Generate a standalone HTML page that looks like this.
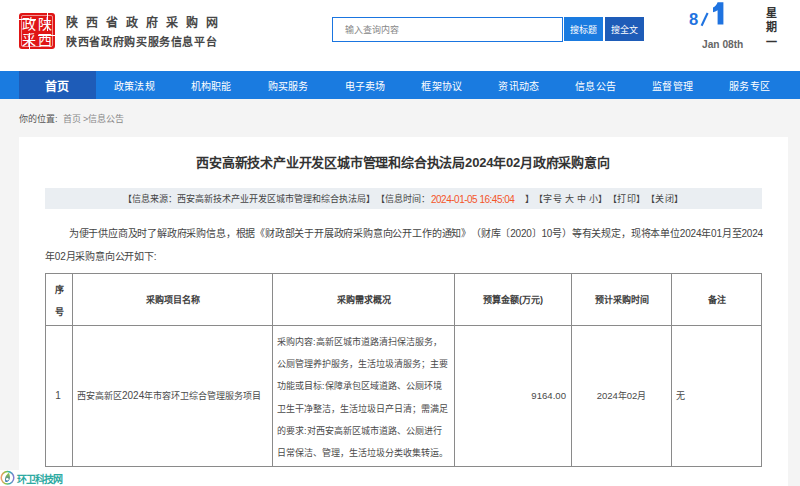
<!DOCTYPE html>
<html lang="zh-CN"><head><meta charset="utf-8">
<style>
*{margin:0;padding:0;box-sizing:border-box;}
html,body{width:800px;height:486px;overflow:hidden;}
body{background:#f4f4f4;font-family:"Liberation Sans",sans-serif;color:#333;position:relative;text-spacing-trim:space-all;}
.abs{position:absolute;white-space:nowrap;}
#header{position:absolute;left:0;top:0;width:800px;height:71px;background:#fff;}
#logo{position:absolute;left:19px;top:13px;width:36px;height:36px;background:#e01515;border-radius:3px;}
#logo .in{position:absolute;left:2px;top:2px;width:32px;height:32px;border:0.6px solid rgba(255,255,255,.55);border-radius:2px;}
#logo .c{position:absolute;color:#fff;font-size:14px;line-height:14px;font-weight:500;}
#logo .l{position:absolute;background:#fff;}
.t1{left:66px;top:16px;font-size:12px;letter-spacing:7.95px;color:#484848;font-weight:bold;line-height:14px;}
.t2{left:66px;top:35px;font-size:11px;letter-spacing:0.65px;color:#484848;font-weight:bold;line-height:14px;}
#search{position:absolute;left:332px;top:17px;width:231px;height:25px;border:1.5px solid #1a75e0;background:#fff;}
#search span{position:absolute;left:12px;top:6px;font-size:9px;color:#888;line-height:12px;}
.btn{position:absolute;top:17px;height:24px;width:39px;color:#fff;font-size:9px;line-height:26px;text-align:center;}
#b1{left:564px;background:#1a7be0;}
#b2{left:605px;background:#1e5cb8;}
#date8{left:689px;top:9.5px;font-size:16.6px;font-weight:bold;color:#1f73e0;line-height:20px;}
#date1{left:711px;top:-3px;font-size:30px;font-weight:bold;color:#1f73e0;line-height:32px;}
#jan{left:702px;top:38px;font-size:10.2px;font-weight:bold;color:#666;line-height:13px;}
#week{left:766px;top:5.5px;font-size:11px;color:#333;line-height:14.8px;white-space:normal;width:12px;font-weight:bold;}
#nav{position:absolute;left:0;top:71px;width:800px;height:28px;background:#1a7be0;}
#nav .it{position:absolute;top:0;width:76.9px;height:28px;line-height:32px;text-align:center;color:#fff;font-size:10px;letter-spacing:0.25px;}
#nav .home{background:#1e5cb8;font-weight:bold;font-size:12px;letter-spacing:0;}
#crumb{left:19px;top:112px;font-size:9px;line-height:14px;color:#555;}
#crumb span{color:#888;}
#panel{position:absolute;left:19px;top:137px;width:769px;height:360px;background:#fff;}
#title{position:absolute;left:0;top:154px;width:806px;text-align:center;font-size:13px;letter-spacing:-0.2px;font-weight:bold;color:#333;line-height:18px;}
#info{position:absolute;left:45px;top:188px;width:717px;height:21px;background:#eaeef2;text-align:center;font-size:9px;line-height:21px;color:#444;white-space:pre;}
#info span{position:absolute;top:1px;}
#info .red{color:#f4552a;font-size:10px;letter-spacing:-0.5px;}
#para{position:absolute;left:45px;top:222px;width:730px;white-space:nowrap;font-size:10px;letter-spacing:-0.19px;line-height:23px;color:#444;text-indent:23.75px;}
.hl{position:absolute;height:1px;background:#8a8a8a;}
.vl{position:absolute;width:1px;background:#8a8a8a;}
.th{position:absolute;font-size:9px;font-weight:bold;color:#3c3c3c;text-align:center;line-height:22px;}
.td{position:absolute;font-size:9px;color:#4a4a4a;line-height:22.2px;}
#wm{position:absolute;left:0;top:470px;width:19px;height:16px;background:#fff;}
#wm span{position:absolute;left:17px;top:3.5px;font-size:10px;font-weight:900;color:#2eaaa2;line-height:12px;white-space:nowrap;letter-spacing:-0.9px;}
</style></head><body>
<div id="header">
  <div id="logo">
    <div class="in"></div>
    <div class="c" style="left:3px;top:4px">政</div>
    <div class="c" style="left:19px;top:4px">陕</div>
    <div class="l" style="left:28px;top:-1px;width:1px;height:19px"></div>
    <div class="l" style="left:0;top:6px;width:17px;height:1px"></div>
    <div class="l" style="left:10px;top:20px;width:1px;height:18px"></div>
    <div class="l" style="left:19px;top:22px;width:18px;height:1px"></div>
    <div class="c" style="left:3px;top:20px">采</div>
    <div class="c" style="left:19px;top:20px">西</div>
  </div>
  <div class="abs t1">陕西省政府采购网</div>
  <div class="abs t2">陕西省政府购买服务信息平台</div>
  <div id="search"><span>输入查询内容</span></div>
  <div class="btn" id="b1">搜标题</div>
  <div class="btn" id="b2">搜全文</div>
  <div class="abs" id="date8">8</div>
  <svg class="abs" style="left:0;top:0" width="800" height="60"><line x1="707.6" y1="13" x2="701.6" y2="25.8" stroke="#1f73e0" stroke-width="2.1"/><path d="M717.6 2.3 L723.4 2.3 L723.4 24.4 L717.6 24.4 L717.6 10.2 C716 11.2 714.6 11.8 713 12.2 L713 7.6 C715 6.8 716.8 5 717.6 2.3 Z" fill="#1f73e0"/></svg>
  <div class="abs" id="jan">Jan 08th</div>
  <div class="abs" id="week">星期一</div>
</div>
<div id="nav">
  <div class="it home" style="left:19px">首页</div>
  <div class="it" style="left:95.9px">政策法规</div>
  <div class="it" style="left:172.8px">机构职能</div>
  <div class="it" style="left:249.7px">购买服务</div>
  <div class="it" style="left:326.6px">电子卖场</div>
  <div class="it" style="left:403.5px">框架协议</div>
  <div class="it" style="left:480.4px">资讯动态</div>
  <div class="it" style="left:557.3px">信息公告</div>
  <div class="it" style="left:634.2px">监督管理</div>
  <div class="it" style="left:711.1px">服务专区</div>
</div>
<div class="abs" id="crumb">你的位置: &nbsp;<span>首页 &gt;信息公告</span></div>
<div id="panel"></div>
<div id="title">西安高新技术产业开发区城市管理和综合执法局2024年02月政府采购意向</div>
<div id="info"><span style="left:78px">【信息来源：西安高新技术产业开发区城市管理和综合执法局】</span><span style="left:331px">【信息时间：</span><span class="red" style="left:386px">2024-01-05 16:45:04</span><span style="left:480px">】</span><span style="left:489px;letter-spacing:0.3px">【字号 大 中 小】</span><span style="left:563px;letter-spacing:0.4px">【打印】</span><span style="left:601px;letter-spacing:0.4px">【关闭】</span></div>
<div id="para">为便于供应商及时了解政府采购信息，根据《财政部关于开展政府采购意向公开工作的通知》（财库〔2020〕10号）等有关规定，现将本单位2024年01月至2024<br>年02月采购意向公开如下:</div>

<div class="hl" style="left:45px;top:273px;width:717px"></div>
<div class="hl" style="left:45px;top:325px;width:717px"></div>
<div class="hl" style="left:45px;top:466px;width:717px"></div>
<div class="vl" style="left:45px;top:273px;height:194px"></div>
<div class="vl" style="left:72px;top:273px;height:194px"></div>
<div class="vl" style="left:272px;top:273px;height:194px"></div>
<div class="vl" style="left:454px;top:273px;height:194px"></div>
<div class="vl" style="left:571px;top:273px;height:194px"></div>
<div class="vl" style="left:671px;top:273px;height:194px"></div>
<div class="vl" style="left:761px;top:273px;height:194px"></div>

<div class="th" style="left:46px;top:279px;width:26px">序<br>号</div>
<div class="th" style="left:73px;top:289px;width:199px">采购项目名称</div>
<div class="th" style="left:273px;top:289px;width:181px">采购需求概况</div>
<div class="th" style="left:455px;top:289px;width:116px">预算金额(万元)</div>
<div class="th" style="left:572px;top:289px;width:99px">预计采购时间</div>
<div class="th" style="left:672px;top:289px;width:89px">备注</div>

<div class="td" style="left:45px;top:385px;width:26px;text-align:center;font-size:10px">1</div>
<div class="td" style="left:77px;top:385px;width:195px;white-space:nowrap">西安高新区<span style="font-size:10px">2024</span>年市容环卫综合管理服务项目</div>
<div class="td" style="left:277px;top:331px;width:177px;white-space:nowrap">采购内容:高新区城市道路清扫保洁服务，<br>公厕管理养护服务，生活垃圾清服务；主要<br>功能或目标:保障承包区域道路、公厕环境<br>卫生干净整洁，生活垃圾日产日清；需满足<br>的要求:对西安高新区城市道路、公厕进行<br>日常保洁、管理，生活垃圾分类收集转运。</div>
<div class="td" style="left:455px;top:385px;width:111px;text-align:right;font-size:9.6px">9164.00</div>
<div class="td" style="left:572px;top:385px;width:99px;text-align:center"><span style="font-size:9.5px">2024</span>年<span style="font-size:9.5px">02</span>月</div>
<div class="td" style="left:676px;top:385px;width:84px">无</div>

<div id="wm"><svg width="16" height="16" style="position:absolute;left:0;top:0"><defs><linearGradient id="rg" x1="0" y1="0" x2="1" y2="0"><stop offset="0" stop-color="#f29a6a"/><stop offset="0.35" stop-color="#8cc63f"/><stop offset="0.65" stop-color="#29b0b8"/><stop offset="1" stop-color="#8a7bd0"/></linearGradient><linearGradient id="dg" x1="0" y1="0" x2="0" y2="1"><stop offset="0" stop-color="#9ccc3c"/><stop offset="1" stop-color="#2f6fc0"/></linearGradient></defs><circle cx="7.5" cy="7.8" r="6.3" fill="none" stroke="url(#rg)" stroke-width="1.5"/><path d="M9 2.8 C5 5.5 4.5 9 5.5 12 C7.5 12.5 10 10.5 10 7.5 C10 6 9.5 4.5 9 2.8 Z" fill="url(#dg)"/><circle cx="7.3" cy="9.3" r="1.3" fill="#fff"/></svg><span>环卫科技网</span></div>
</body></html>
